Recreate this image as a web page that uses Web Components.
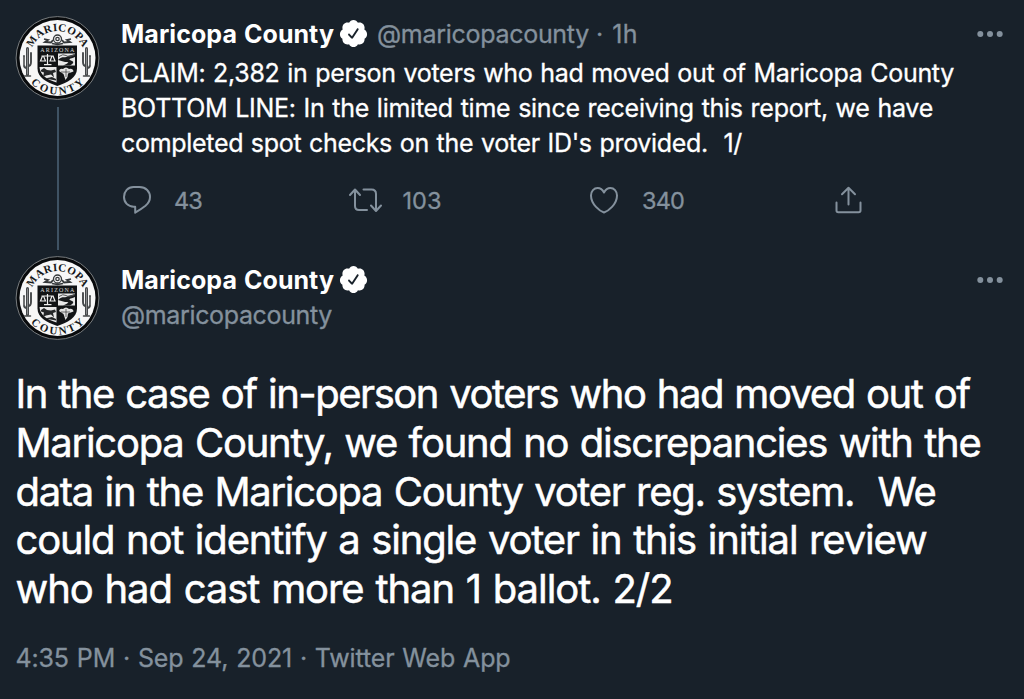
<!DOCTYPE html>
<html lang="en">
<head>
<meta charset="utf-8">
<title>Maricopa County thread</title>
<style>
    body {
        margin: 0;
        background: #18212a;
        color: #fff;
        font-family: Inter, Roboto, "Liberation Sans", sans-serif;
        font-size: 25px;
        line-height: 35px;
        --muted: #84919d;
        --rail: #3f5364;
    }
</style>
</head>
<body>
<tweet-thread>
    <thread-tweet>
        <county-seal slot="avatar"></county-seal>
        <tweet-author slot="author" time="1h"></tweet-author>
        <fit-line width="833">CLAIM: 2,382 in person voters who had moved out of Maricopa County</fit-line>
        <fit-line width="812">BOTTOM LINE: In the limited time since receiving this report, we have</fit-line>
        <fit-line width="621">completed spot checks on the voter ID's provided.  1/</fit-line>
        <tweet-actions slot="actions"></tweet-actions>
    </thread-tweet>
    <focus-tweet>
        <county-seal slot="avatar"></county-seal>
        <tweet-author slot="author" stacked></tweet-author>
        <fit-line width="954">In the case of in-person voters who had moved out of</fit-line>
        <fit-line width="965">Maricopa County, we found no discrepancies with the</fit-line>
        <fit-line width="920">data in the Maricopa County voter reg. system.  We</fit-line>
        <fit-line width="911">could not identify a single voter in this initial review</fit-line>
        <fit-line width="657">who had cast more than 1 ballot. 2/2</fit-line>
        <fit-line slot="meta" width="495">4:35 PM · Sep 24, 2021 · Twitter Web App</fit-line>
    </focus-tweet>
</tweet-thread>

<script>
class TweetThread extends HTMLElement {
    connectedCallback() {
        this.attachShadow({ mode: 'open' }).innerHTML = `
            <style>
                :host {
                    display: flex;
                    flex-direction: column;
                    box-sizing: border-box;
                    width: 1024px;
                    height: 699px;
                    padding: 16px 16px 0 15px;
                    overflow: hidden;
                }
            </style>
            <slot></slot>
        `;
    }
}

class ThreadTweet extends HTMLElement {
    connectedCallback() {
        this.attachShadow({ mode: 'open' }).innerHTML = `
            <style>
                :host { display: flex; gap: 21px; height: 240px; }
                .side { display: flex; flex-direction: column; align-items: center; width: 85px; }
                .rail { width: 2px; height: 143px; margin-top: 6px; background: var(--rail); }
                .main { flex: 1; min-width: 0; }
                .text { margin-top: 5px; -webkit-text-stroke: 0.3px #fff; }
            </style>
            <div class="side"><slot name="avatar"></slot><div class="rail"></div></div>
            <div class="main">
                <slot name="author"></slot>
                <div class="text"><slot></slot></div>
                <slot name="actions"></slot>
            </div>
        `;
    }
}

class FocusTweet extends HTMLElement {
    connectedCallback() {
        this.attachShadow({ mode: 'open' }).innerHTML = `
            <style>
                :host { display: block; }
                .head { display: flex; gap: 21px; }
                .who { flex: 1; padding-top: 6px; }
                .text { font-size: 40px; line-height: 48.75px; margin-top: 29px; padding-left: 0.5px; -webkit-text-stroke: 0.5px #fff; }
                .meta { margin-top: 27px; padding-left: 0.5px; color: var(--muted); -webkit-text-stroke: 0.3px var(--muted); }
            </style>
            <div class="head">
                <slot name="avatar"></slot>
                <div class="who"><slot name="author"></slot></div>
            </div>
            <div class="text"><slot></slot></div>
            <div class="meta"><slot name="meta"></slot></div>
        `;
    }
}

// One line of text, tracked so that it fills the given width
class FitLine extends HTMLElement {
    connectedCallback() {
        this.attachShadow({ mode: 'open' }).innerHTML = `
            <style>
                :host { display: block; }
                span { display: inline-block; vertical-align: top; white-space: pre; word-spacing: 0.04em; }
            </style>
            <span><slot></slot></span>
        `;
        requestAnimationFrame(() => this.fit());
    }

    fit() {
        const span = this.shadowRoot.querySelector('span');
        const extra = Number(this.getAttribute('width')) - span.getBoundingClientRect().width;
        span.style.letterSpacing = extra / this.textContent.length + 'px';
    }
}

class TweetAuthor extends HTMLElement {
    connectedCallback() {
        const stacked = this.hasAttribute('stacked');
        const time = this.getAttribute('time');
        this.attachShadow({ mode: 'open' }).innerHTML = `
            <style>
                :host { display: block; }
                .row { display: flex; align-items: center; height: 35px; }
                .name { font-weight: 700; width: 217px; padding-top: 2px; }
                .badge { width: 31px; height: 31px; flex: none; fill: #fff; }
                .handle { color: var(--muted); width: 211px; padding-top: 1px; -webkit-text-stroke: 0.3px var(--muted); }
                .row .handle { margin-left: 8px; padding-top: 2px; }
                .time { color: var(--muted); margin-left: 8px; padding-top: 2px; -webkit-text-stroke: 0.3px var(--muted); }
                .more { width: 26px; height: 8px; margin-left: auto; margin-right: 5px; fill: var(--muted); }
            </style>
            <div class="row">
                <fit-line class="name" width="213">Maricopa County</fit-line>
                <svg class="badge" viewBox="0 0 24 24"><path d="M22.5 12.5c0-1.58-.875-2.95-2.148-3.6.154-.435.238-.905.238-1.4 0-2.21-1.71-3.998-3.818-3.998-.47 0-.92.084-1.336.25C14.818 2.415 13.51 1.5 12 1.5s-2.816.917-3.437 2.25c-.415-.165-.866-.25-1.336-.25-2.11 0-3.818 1.79-3.818 4 0 .494.083.964.237 1.4-1.272.65-2.147 2.018-2.147 3.6 0 1.495.782 2.798 1.942 3.486-.02.17-.032.34-.032.514 0 2.21 1.708 4 3.818 4 .47 0 .92-.086 1.335-.25.62 1.334 1.926 2.25 3.437 2.25 1.512 0 2.818-.916 3.437-2.25.415.163.865.248 1.336.248 2.11 0 3.818-1.79 3.818-4 0-.174-.012-.344-.033-.513 1.158-.687 1.943-1.99 1.943-3.484zm-6.616-3.334l-4.334 6.5c-.145.217-.382.334-.625.334-.143 0-.288-.04-.416-.126l-.115-.094-2.415-2.415c-.293-.293-.293-.768 0-1.06s.768-.294 1.06 0l1.77 1.767 3.825-5.74c.23-.345.696-.436 1.04-.207.346.23.44.696.21 1.04z"/></svg>
                ${stacked ? '' : '<fit-line class="handle" width="212">@maricopacounty</fit-line>'}
                ${time ? `<fit-line class="time" width="42">· ${time}</fit-line>` : ''}
                <svg class="more" viewBox="0 0 26 8"><circle cx="3.3" cy="4" r="3"/><circle cx="13" cy="4" r="3"/><circle cx="22.7" cy="4" r="3"/></svg>
            </div>
            ${stacked ? '<fit-line class="handle" width="211">@maricopacounty</fit-line>' : ''}
        `;
    }
}

class TweetActions extends HTMLElement {
    connectedCallback() {
        this.attachShadow({ mode: 'open' }).innerHTML = `
            <style>
                :host { display: flex; height: 34px; margin-top: 22px; color: var(--muted); font-size: 23.5px; line-height: 35px; }
                div { display: flex; flex: none; }
                .reply { width: 226.5px; }
                .retweet { width: 239.5px; }
                .like { width: 245px; }
                svg { flex: none; width: 34px; height: 34px; margin-right: 21px; fill: none; stroke: currentColor; stroke-width: 2; stroke-linecap: round; stroke-linejoin: round; }
                .reply svg { margin-right: 19px; }
                fit-line { -webkit-text-stroke: 0.3px var(--muted); }
            </style>
            <div class="reply">
                <svg viewBox="0 0 34 34"><path d="M12.500 4h6C25 4 29 8.600 29 14C29 17.500 27.200 20.500 24.500 22.800Q20.500 26 14.200 29.700V23.700H12.700C7 23.700 3 19.500 3 14C3 8.500 7 4 12.500 4Z"/></svg>
                <fit-line width="28">43</fit-line>
            </div>
            <div class="retweet">
                <svg viewBox="0 0 34 34"><path d="M2 12l5-5.500 5 5.500M7 7v16q0 4 4 4h8M15.500 6.500h8q4.500 0 4.500 4.500v16.500M23 22.500l5 5.500 5-5.500"/></svg>
                <fit-line width="39">103</fit-line>
            </div>
            <div class="like">
                <svg viewBox="0 0 34 34"><path d="M17 29.500C13 28.200 4 21.500 4 12.500C4 8 7 5 10.600 5C13.500 5 15.500 6.600 17 9.500C18.500 6.600 20.500 5 23.400 5C27 5 30 8 30 12.500C30 21.500 21 28.200 17 29.500Z"/></svg>
                <fit-line width="42">340</fit-line>
            </div>
            <div class="share">
                <svg viewBox="0 0 34 34"><path d="M16.500 21.500V5M10 11.300L16.500 4.800 23 11.300M4.500 19.500v8q0 1.800 1.800 1.800h20.400q1.800 0 1.800-1.800v-8"/></svg>
            </div>
        `;
    }
}

class CountySeal extends HTMLElement {
    connectedCallback() {
        this.attachShadow({ mode: 'open' }).innerHTML = `
            <style>
                :host { display: block; width: 85px; height: 85px; flex: none; }
                svg { display: block; }
                text { font-family: "Liberation Serif", serif; font-weight: 700; }
            </style>
            <svg width="85" height="85" viewBox="0 0 85 85">
                <defs>
                    <path id="top" d="M15 42.500a27.500 27.500 0 0 1 55 0"/>
                    <path id="bottom" d="M6 42a36.500 36.500 0 0 0 73 0"/>
                </defs>
                <circle cx="42.500" cy="42" r="41.400" fill="#080a0c" stroke="#929697" stroke-width=".8"/>
                <circle cx="42.500" cy="42" r="38" fill="#f7f7f7"/>
                <g fill="#151719" font-size="11">
                    <text><textPath href="#top" startOffset="50%" text-anchor="middle" textLength="64">MARICOPA</textPath></text>
                    <text><textPath href="#bottom" startOffset="50%" text-anchor="middle" textLength="60">COUNTY</textPath></text>
                </g>
                <!-- crest above the shield -->
                <g fill="none" stroke="#36393b" stroke-width="1.300">
                    <circle cx="42.500" cy="23" r="4"/>
                    <circle cx="42.500" cy="23" r="1.700"/>
                    <path d="M29 23l4 1-3 2 6 .5 2-2.500M56 23l-4 1 3 2-6 .5-2-2.500M37 27.500q5.500 1.500 11 0" stroke-width="1.800"/>
                </g>
                <path d="M22.500 29.500h39.500v23c0 9-9 14-19.700 17.500-10.800-3.500-19.800-8.500-19.800-17.500z" fill="#111315"/>
                <text x="42.300" y="35.800" font-size="6" text-anchor="middle" textLength="34" fill="#d8d8d8" style="font-weight:400">ARIZONA</text>
                <path d="M43 37.500H60V49.500H43zM24.500 51h17v15.500C32 63.500 25 59.500 24.500 51z" fill="#e8e8e8"/>
                <path d="M43 44c5-5 6-1 10-4l7-2v3c-5 2-8 2-3 4 3 1 0 3.500-2 4.500h-7c5-2.500 8-3.500 2-3.500z" fill="#191b1d"/>
                <path d="M44 40.500q4-3 7-1t9-1" fill="none" stroke="#555" stroke-width="1"/>
                <path d="M32.500 38v10.500M26.500 40h12M29 48.700h7.500M27.500 40l-2 5h5l-2-5M37 40l-2 5h5l-2-5" fill="none" stroke="#eee" stroke-width="1.200"/>
                <path d="M26 54l3-2 3 2 4 .5 4-1 1 2.500-3 1 1 4.500-3-3-5 1-3 1.500 1-4.500-3-1zM30 62.500l7-1.500 4 2v1.500z" fill="#242628"/>
                <path d="M44 55q1-3 4-2 3-3 6 0 4-1 4.500 2.500l-5.500 2-.5 3.500-2 3-2-6z" fill="#e1e1e1"/>
                <path d="M46 56h9M51 53v8" stroke="#333" stroke-width=".7"/>
                <!-- saguaros on both sides -->
                <g id="cactus" fill="none" stroke="#45484a" stroke-linecap="round">
                    <path d="M12.500 32.500v26" stroke-width="3"/>
                    <path d="M9 40v9q0 3 3 3M16 37v9q0 4-3 4" stroke-width="1.900"/>
                    <path d="M9.500 60h6" stroke-width="1.500"/>
                    <path d="M12.500 33v25M9 41v8" stroke="#b8b8b8" stroke-width=".6"/>
                </g>
                <use href="#cactus" transform="translate(84 0) scale(-1 1)"/>
            </svg>
        `;
    }
}

customElements.define('fit-line', FitLine);
customElements.define('county-seal', CountySeal);
customElements.define('tweet-author', TweetAuthor);
customElements.define('tweet-actions', TweetActions);
customElements.define('thread-tweet', ThreadTweet);
customElements.define('focus-tweet', FocusTweet);
customElements.define('tweet-thread', TweetThread);
</script>
</body>
</html>
